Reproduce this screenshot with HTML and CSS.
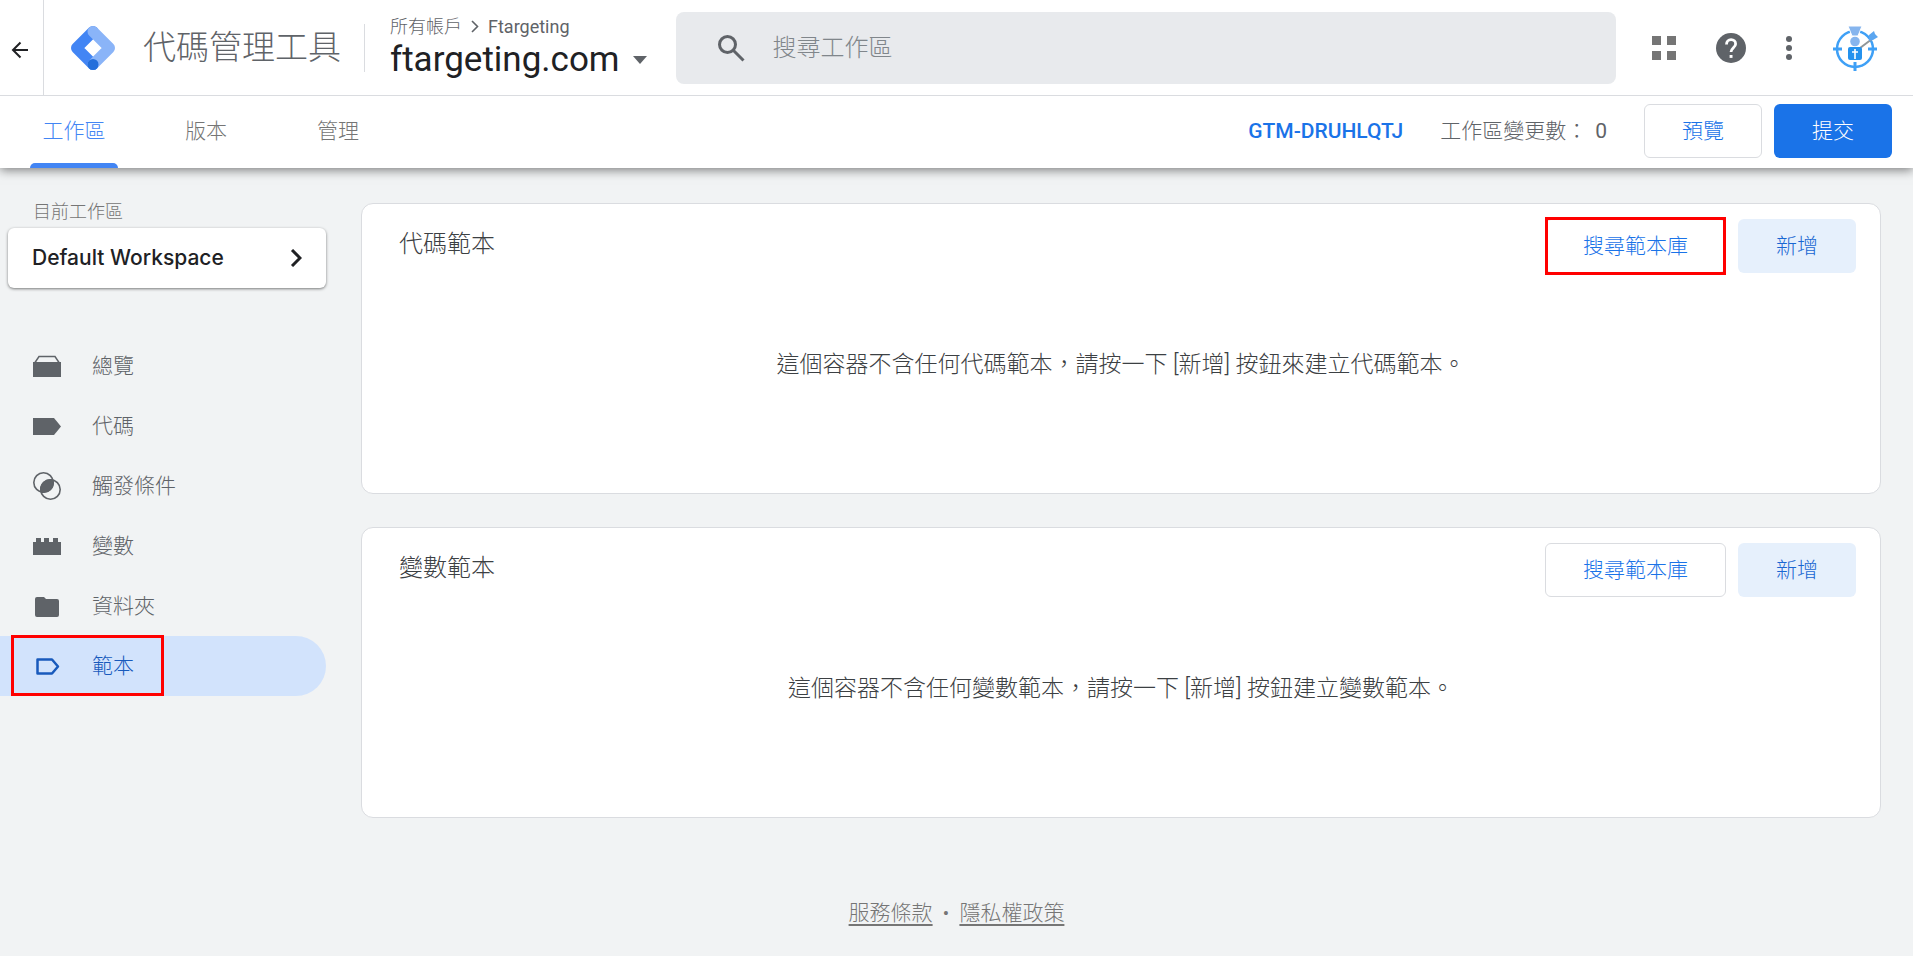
FILE: index.html
```html
<!DOCTYPE html>
<html lang="zh-Hant">
<head>
<meta charset="utf-8">
<meta name="viewport" content="width=device-width, initial-scale=1">
<title>代碼管理工具</title>
<link rel="stylesheet" href="styles.css">
</head>
<body>
<header class="topbar">
  <button class="back" type="button" aria-label="返回">
    <svg width="18" height="18" viewBox="0 0 18 18" fill="none" stroke="#202124" stroke-width="2"><path d="M17 9H2M9.500 1.500 2 9l7.500 7.500"/></svg>
  </button>
  <a class="brand" href="#">
    <svg width="44" height="44" viewBox="0 0 44 44" fill="none" stroke-width="11" stroke-linejoin="round" stroke-linecap="round">
      <path stroke="#4285f4" d="M22 5.500 5.500 22 22 38.500"/>
      <path stroke="#8ab4f8" d="M22 5.500 38.500 22 22 38.500"/>
      <circle cx="22" cy="38.500" r="5.500" fill="#246fdb" stroke="none"/>
    </svg>
    <span class="brand-name">代碼管理工具</span>
  </a>
  <div class="account">
    <nav class="crumbs" aria-label="帳戶">
      <a href="#">所有帳戶</a>
      <svg width="8" height="13" viewBox="0 0 8 13" fill="none" stroke="#5f6368" stroke-width="1.600"><path d="m1 1 5.500 5.500L1 12"/></svg>
      <a href="#">Ftargeting</a>
    </nav>
    <button class="container-name" type="button">ftargeting.com
      <svg width="14" height="8" viewBox="0 0 14 8" fill="#5f6368"><path d="M0 0h14L7 8z"/></svg>
    </button>
  </div>
  <label class="search">
    <svg width="28" height="28" viewBox="0 0 28 28" fill="none" stroke="#5f6368" stroke-width="3"><circle cx="10.500" cy="10.500" r="8"/><path d="m16.500 16.500 10 10"/></svg>
    <input type="text" placeholder="搜尋工作區" aria-label="搜尋工作區">
  </label>
  <div class="tools">
    <button type="button" aria-label="應用程式">
      <svg width="24" height="24" viewBox="0 0 24 24" fill="#757575"><path d="M0 0h9v9H0zM15 0h9v9h-9zM0 15h9v9H0zM15 15h9v9h-9z"/></svg>
    </button>
    <button type="button" aria-label="說明">
      <svg width="30" height="30" viewBox="0 0 30 30"><circle cx="15" cy="15" r="15" fill="#5f6368"/><path d="M10.500 11.500c0-2.800 1.900-4.800 4.600-4.800 2.600 0 4.500 1.700 4.500 4.200 0 3.600-4.600 4-4.600 8.100" fill="none" stroke="#fff" stroke-width="2.800"/><path d="M13.600 22h2.900v2.900h-2.900z" fill="#fff"/></svg>
    </button>
    <button type="button" aria-label="更多">
      <svg width="6" height="24" viewBox="0 0 6 24" fill="#5f6368"><circle cx="3" cy="3" r="3"/><circle cx="3" cy="12" r="3"/><circle cx="3" cy="21" r="3"/></svg>
    </button>
    <button type="button" aria-label="個人帳戶">
      <svg width="46" height="46" viewBox="0 0 46 46">
        <circle cx="23" cy="24" r="18" fill="none" stroke="#3fa0f6" stroke-width="2.500"/>
        <path d="M1 24h9M36 24h9M23 37v9" stroke="#3fa0f6" stroke-width="3"/>
        <path d="M16 1h14l-4 10h-6z" fill="#86b5ee" stroke="#fff"/>
        <circle cx="23" cy="16.500" r="4.800" fill="#86b5ee"/>
        <path d="m28 23 12-9" stroke="#8f9699" stroke-width="2"/>
        <path d="M16 24q0-2 2-2h10q2 0 2 2v9q0 2-2 2H18q-2 0-2-2z" fill="#2492ee"/>
        <path d="M23 24v10M20 27h6" stroke="#fff" stroke-width="1.600"/>
        <path d="m37 10 5-4 1 3 3 3-5 3-4 1z" fill="#5ba6f0"/>
      </svg>
    </button>
  </div>
</header>

<div class="tabbar">
  <nav class="tabs" aria-label="主要">
    <a class="tab tab-active" href="#" aria-current="page">工作區</a>
    <a class="tab" href="#">版本</a>
    <a class="tab" href="#">管理</a>
  </nav>
  <div class="actions">
    <a class="container-id" href="#">GTM-DRUHLQTJ</a>
    <span class="changes">工作區變更數：<span class="count">0</span></span>
    <button class="btn btn-outline" type="button">預覽</button>
    <button class="btn btn-primary" type="button">提交</button>
  </div>
</div>

<div class="page">
  <aside class="sidebar">
    <div class="workspace-label" id="ws-label">目前工作區</div>
    <button class="workspace" type="button" aria-describedby="ws-label">Default Workspace
      <svg width="12" height="18" viewBox="0 0 12 18" fill="none" stroke="#202124" stroke-width="3"><path d="m2 1 8 8-8 8"/></svg>
    </button>
    <nav class="menu" aria-label="工作區">
      <a class="item" href="#">
        <svg width="28" height="28" viewBox="0 0 28 28"><path d="M0 10h28v15H0z" fill="#5f6368"/><path d="M2 10.500 6 4.600h16l4 5.900" fill="none" stroke="#5f6368" stroke-width="1.500"/></svg>
        總覽</a>
      <a class="item" href="#">
        <svg width="28" height="28" viewBox="0 0 28 28" fill="#5f6368"><path d="M0 6h21l7 8.500-7 8.500H0z"/></svg>
        代碼</a>
      <a class="item" href="#">
        <svg width="28" height="28" viewBox="0 0 28 28" fill="none" stroke="#5f6368" stroke-width="1.600"><circle cx="10.500" cy="10.500" r="9.700"/><circle cx="17.500" cy="17.500" r="9.700"/><path fill="#5f6368" d="M19.900 8.100A9.700 9.700 0 0 1 8.100 19.900 9.700 9.700 0 0 1 19.900 8.100z"/></svg>
        觸發條件</a>
      <a class="item" href="#">
        <svg width="28" height="28" viewBox="0 0 28 28" fill="#5f6368"><path d="M0 10h3V6h5v4h3V6h5v4h4V6h5v4h3v13H0z"/></svg>
        變數</a>
      <a class="item" href="#">
        <svg width="28" height="28" viewBox="0 0 28 28" fill="#5f6368"><path d="M4 5h7l2 2h11q2 0 2 2v14q0 2-2 2H4q-2 0-2-2V7q0-2 2-2z"/></svg>
        資料夾</a>
      <a class="item item-active" href="#" aria-current="page">
        <svg width="28" height="28" viewBox="0 0 28 28" fill="none" stroke="#185abc" stroke-width="2.500" stroke-linejoin="round"><path d="M4.500 7.500h14.500l6 7-6 7H4.500z"/></svg>
        範本<span class="mark mark-item"></span></a>
    </nav>
  </aside>

  <main class="content">
    <section class="card">
      <div class="card-head">
        <h2>代碼範本</h2>
        <button class="btn btn-outline" type="button">搜尋範本庫<span class="mark mark-button"></span></button>
        <button class="btn btn-tonal" type="button">新增</button>
      </div>
      <p class="empty">這個容器不含任何代碼範本，請按一下 [新增] 按鈕來建立代碼範本。</p>
    </section>
    <section class="card">
      <div class="card-head">
        <h2>變數範本</h2>
        <button class="btn btn-outline" type="button">搜尋範本庫</button>
        <button class="btn btn-tonal" type="button">新增</button>
      </div>
      <p class="empty">這個容器不含任何變數範本，請按一下 [新增] 按鈕建立變數範本。</p>
    </section>
  </main>
</div>

<footer class="footer">
  <a href="#">服務條款</a><span>•</span><a href="#">隱私權政策</a>
</footer>
</body>
</html>
```
FILE: styles.css
```css
* {
  box-sizing: border-box;
}

body {
  margin: 0;
  background: #f1f3f4;
  color: #5f6368;
  font: 300 21px/30px Roboto, "Noto Sans CJK TC", sans-serif;
}

a {
  color: inherit;
  text-decoration: none;
}

button {
  padding: 0;
  border: 0;
  background: none;
  color: inherit;
  font: inherit;
  cursor: pointer;
}

svg {
  display: block;
  flex: none;
}

/* Top bar */
.topbar {
  display: flex;
  align-items: center;
  height: 96px;
  border-bottom: 1px solid #dadce0;
  background: #fff;
}

.back {
  display: flex;
  align-items: center;
  align-self: stretch;
  width: 44px;
  padding: 4px 0 0 11px;
  border-right: 1px solid #dadce0;
}

.brand {
  display: flex;
  align-items: center;
  gap: 28px;
  height: 48px;
  padding: 0 23px 0 27px;
  border-right: 1px solid #dadce0;
  font-size: 33px;
  white-space: nowrap;
}

.account {
  padding-left: 25px;
  white-space: nowrap;
}

.crumbs {
  display: flex;
  align-items: center;
  gap: 9px;
  font-size: 18px;
  line-height: 24px;
  font-weight: 400;
}

.crumbs a:first-child {
  font-weight: 300;
}

.container-name {
  display: flex;
  align-items: center;
  gap: 13px;
  color: #202124;
  font: 400 35px/42px Roboto, sans-serif;
}

.search {
  display: flex;
  flex: 1;
  align-items: center;
  gap: 28px;
  height: 72px;
  margin-left: 29px;
  padding: 0 41px;
  border-radius: 8px;
  background: #e8eaed;
}

.search input {
  flex: 1;
  min-width: 0;
  padding: 0;
  border: 0;
  outline: 0;
  background: none;
  color: #202124;
  font: inherit;
  font-size: 24px;
}

.search input::placeholder {
  color: #80868b;
  opacity: 1;
}

.tools {
  display: flex;
  align-items: center;
  gap: 40px;
  padding: 0 35px 0 36px;
}

/* Tab bar: the shadow shows only below it */
.tabbar {
  position: relative;
  display: flex;
  justify-content: space-between;
  height: 72px;
  padding: 0 21px 0 30px;
  background: #fff;
  box-shadow: 0 2px 10px rgba(0, 0, 0, 0.5);
  clip-path: inset(0 0 -20px);
}

.tabs {
  display: flex;
  gap: 44px;
}

.tab {
  display: flex;
  align-items: center;
  justify-content: center;
  width: 88px;
  padding-bottom: 2px;
  color: #757575;
}

.tab-active {
  position: relative;
  color: #4285f4;
}

.tab-active::after {
  content: "";
  position: absolute;
  inset: auto 0 0;
  height: 5px;
  border-radius: 5px 5px 0 0;
  background: #4285f4;
}

.actions {
  display: flex;
  align-items: center;
  padding-bottom: 2px;
  white-space: nowrap;
}

.container-id {
  color: #1a73e8;
  font-weight: 500;
}

.changes {
  margin: 0 37px;
}

.count {
  margin-left: 8px;
  font-weight: 400;
}

.btn {
  position: relative;
  height: 54px;
  padding: 0 37px;
  border: 1px solid transparent;
  border-radius: 6px;
  color: #1a73e8;
  white-space: nowrap;
}

.btn + .btn {
  margin-left: 12px;
}

.btn-outline {
  border-color: #dadce0;
  background: #fff;
}

.btn-primary {
  background: #1a73e8;
  color: #fff;
}

.btn-tonal {
  background: #e6f0fc;
  color: #1967d2;
}

/* Page body */
.page {
  display: flex;
  gap: 35px;
  padding: 35px 32px 0 0;
}

.sidebar {
  flex: none;
  width: 326px;
}

.workspace-label {
  padding-left: 33px;
  color: #757575;
  font-size: 18px;
  line-height: 18px;
}

.workspace {
  display: flex;
  align-items: center;
  justify-content: space-between;
  width: 318px;
  height: 60px;
  margin: 7px 0 48px 8px;
  padding: 0 24px;
  border-radius: 6px;
  background: #fff;
  box-shadow: 0 1px 3px rgba(0, 0, 0, 0.5);
  color: #202124;
  font: 500 21px/30px Inter, sans-serif;
}

.item {
  position: relative;
  display: flex;
  align-items: center;
  gap: 31px;
  height: 60px;
  padding-left: 33px;
}

.item-active {
  border-radius: 0 30px 30px 0;
  background: #d2e3fc;
  color: #185abc;
}

/* Red highlight frames lying over controls */
.mark {
  position: absolute;
  border: 3px solid #f00;
}

.mark-item {
  inset: -1px auto 0 11px;
  width: 153px;
}

.mark-button {
  inset: -3px -1px;
}

.content {
  display: flex;
  flex: 1;
  flex-direction: column;
  gap: 33px;
  min-width: 0;
}

.card {
  padding: 15px 24px 113px;
  border: 1px solid #dadce0;
  border-radius: 12px;
  background: #fff;
  color: #3c4043;
}

.card-head {
  display: flex;
  align-items: center;
}

.card-head h2 {
  margin: 0 auto 4px 13px;
  font-size: 24px;
  font-weight: 300;
  line-height: 36px;
}

.empty {
  margin: 77px 0 0;
  font-size: 23px;
  text-align: center;
}

.footer {
  display: flex;
  justify-content: center;
  gap: 10px;
  padding: 80px 0 24px;
  color: #757575;
}

.footer a {
  text-decoration: underline;
  text-decoration-thickness: 2px;
  text-underline-offset: 4px;
}
```
